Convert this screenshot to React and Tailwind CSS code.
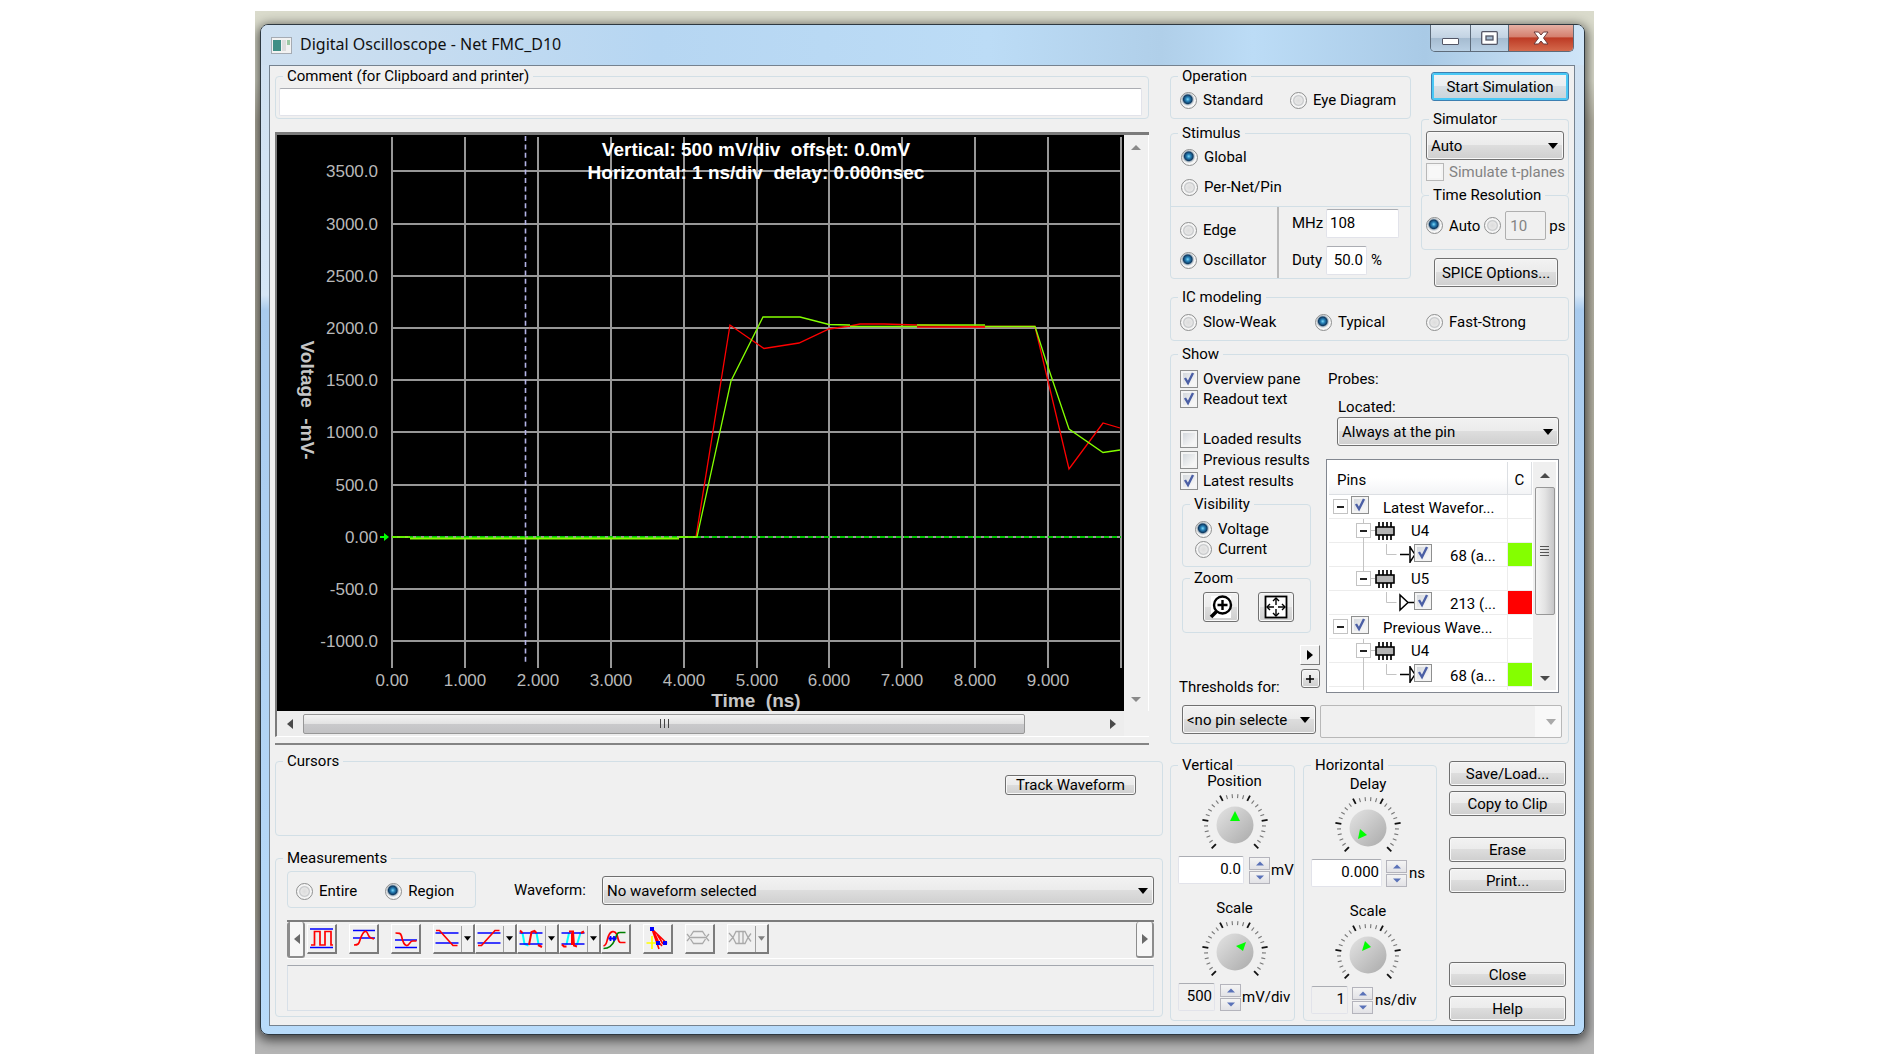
import { useId } from "react";

const GREEN = "#84ff00";
const NBSP = "\u00a0";

const gridX = [115, 188, 261, 334, 407, 480, 552, 625, 698, 771, 844];
const gridY = [36, 89, 141, 193, 245, 297, 350, 402, 454, 506];
const yLabels = ["3500.0", "3000.0", "2500.0", "2000.0", "1500.0", "1000.0", "500.0", "0.00", "-500.0", "-1000.0"];
const xLabels = ["0.00", "1.000", "2.000", "3.000", "4.000", "5.000", "6.000", "7.000", "8.000", "9.000"];

const pinRows = [
  { type: "root", text: "Latest Wavefor..." },
  { type: "chip", text: "U4" },
  { type: "leaf", text: "68 (a...", color: GREEN, out: false, more: true },
  { type: "chip", text: "U5", last: true },
  { type: "leaf", text: "213 (...", color: "#ff0000", out: true },
  { type: "root", text: "Previous Wave..." },
  { type: "chip", text: "U4" },
  { type: "leaf", text: "68 (a...", color: GREEN, out: false, more: true },
  { type: "chip", text: "", last: true },
];

const Group = ({ title, className = "", bodyClass = "", children }) => (
  <fieldset className={`min-w-0 rounded-[4px] border border-[#d2dfe6] ${className}`}>
    {title && <legend className="ml-[7px] px-1 h-5 leading-5">{title}</legend>}
    <div className={bodyClass}>{children}</div>
  </fieldset>
);

const Radio = ({ label, ariaLabel, name, checked, className = "" }) => (
  <label className={`flex items-center gap-[6px] h-5 whitespace-nowrap ${className}`}>
    <input
      type="radio"
      name={name}
      aria-label={ariaLabel}
      defaultChecked={checked}
      className="appearance-none shrink-0 size-[17px] rounded-full border border-[#8e8f8f] bg-[radial-gradient(circle,#dcdcdc_0%,#e6e6e6_35%,#c4c6c8_45%,#f6f6f6_58%)] checked:bg-[radial-gradient(circle_at_45%_42%,#7fd8f5_0%,#2a86bd_16%,#0e3a62_36%,#b9c3cb_46%,#f6f6f6_58%)]"
    />
    {label}
  </label>
);

const Check = ({ label, ariaLabel, checked, disabled, className = "" }) => (
  <label className={`flex items-center gap-[5px] h-5 whitespace-nowrap ${disabled ? "text-[#838383]" : ""} ${className}`}>
    <span className="relative block size-[18px] shrink-0">
      <input
        type="checkbox"
        aria-label={ariaLabel}
        defaultChecked={checked}
        disabled={disabled}
        className="peer appearance-none block size-[18px] border border-[#8e8f8f] bg-[linear-gradient(135deg,#cdd2d8,#f6f6f6_75%)] shadow-[inset_0_0_0_2px_#f4f4f4] disabled:border-[#b8b8b8] disabled:bg-none disabled:bg-[#f8f8f8]"
      />
      <svg viewBox="0 0 18 18" className="absolute inset-0 hidden peer-checked:block pointer-events-none">
        <path d="M5 8l3 5 5-10" fill="none" stroke="#4b5fa5" strokeWidth="2.4" />
      </svg>
    </span>
    {label}
  </label>
);

const Button = ({ className = "", children, ...rest }) => (
  <button
    className={`rounded-[3px] border border-[#707070] bg-[linear-gradient(#f2f2f2,#ebebeb_49%,#dddddd_50%,#cfcfcf)] shadow-[inset_0_0_0_1px_#f8f8f8] whitespace-nowrap flex items-center justify-center ${className}`}
    {...rest}
  >
    {children}
  </button>
);

const Select = ({ value, label, className = "" }) => (
  <span className={`relative block ${className}`}>
    <select
      aria-label={label}
      className="appearance-none block w-full h-[29px] pl-1 pr-6 rounded-[3px] border border-[#707070] bg-[linear-gradient(#f2f2f2,#ebebeb_49%,#dddddd_50%,#cfcfcf)] shadow-[inset_0_0_0_1px_#f8f8f8]"
    >
      <option>{value}</option>
    </select>
    <svg viewBox="0 0 10 6" className="absolute right-[6px] top-[12px] w-[10px] h-[6px] pointer-events-none">
      <path d="M0 0h10L5 6z" />
    </svg>
  </span>
);

const TextBox = ({ label, value, className = "", ...rest }) => (
  <input
    type="text"
    aria-label={label}
    defaultValue={value}
    className={`block min-w-0 border border-[#e2e3ea] border-t-[#abadb3] rounded-[2px] bg-white read-only:bg-[#f0f0f0] disabled:bg-transparent disabled:border-[#afafaf] disabled:text-[#838383] ${className}`}
    {...rest}
  />
);

const Triangle = ({ dir, color = "#4a4a4a", className = "w-[10px] h-[10px]" }) => {
  const d = { up: "M0 8h10L5 3z", down: "M0 3h10L5 8z", left: "M8 0v10L2 5z", right: "M2 0v10l6-5z" }[dir];
  return (
    <svg viewBox="0 0 10 10" className={className}>
      <path d={d} fill={color} />
    </svg>
  );
};

const Spinner = ({ label }) => (
  <span className="flex flex-col w-[21px] shrink-0 gap-px">
    {["up", "down"].map((dir) => (
      <button key={dir} aria-label={`${label} ${dir}`} className="h-[13px] flex items-center justify-center border border-[#b4b4bc] bg-[linear-gradient(#f4f4f4,#e2e2e6)]">
        <Triangle dir={dir} color="#5a72b8" className="w-2 h-2" />
      </button>
    ))}
  </span>
);

const Knob = ({ pointer }) => {
  const fill = useId();
  const ticks = Array.from({ length: 26 }, (_, i) => i);
  return (
    <svg viewBox="0 0 72 62" className="block w-[72px] h-[62px] mx-auto">
      <defs>
        <linearGradient id={fill} x1="0" y1="0" x2="1" y2="1">
          <stop offset="0" stopColor="#e4e4e4" />
          <stop offset="1" stopColor="#aaaaaa" />
        </linearGradient>
      </defs>
      {ticks.map((i) => {
        const major = i % 5 === 0;
        return (
          <line
            key={i}
            x1="36"
            x2="36"
            y1={major ? 1 : 3}
            y2="7"
            stroke={major ? "#111" : "#777"}
            strokeWidth={major ? 1.8 : 1.1}
            transform={`rotate(${-135 + i * 10.8} 36 34)`}
          />
        );
      })}
      <circle cx="36" cy="34" r="18.5" fill={`url(#${fill})`} />
      <polygon points={pointer} fill="#00ff00" transform="translate(36 34)" />
    </svg>
  );
};

const Plot = () => (
  <svg viewBox="0 0 847 576" className="block flex-1 min-w-0 bg-black font-['Liberation_Sans']">
    <g stroke="#979797" strokeWidth="2">
      {gridX.map((x) => <line key={x} x1={x} x2={x} y1="2" y2="533" />)}
      {gridY.map((y) => <line key={y} x1="115" x2="844" y1={y} y2={y} />)}
    </g>
    <line x1="248.5" x2="248.5" y1="1" y2="529" stroke="#b4b4e6" strokeWidth="1.600" strokeDasharray="5 3.4" />
    <line x1="115" x2="844" y1="402" y2="402" stroke="#00c800" strokeWidth="2" strokeDasharray="5 3" />
    <path d="M103 402h5" stroke="#00ff00" strokeWidth="2" />
    <path d="M107 398v8l5-4z" fill="#00ff00" />

    <g fill="none" strokeWidth="1.3">
      <path stroke="#ff0000" d="M419 402L453 190L487 213.5L522 208L552 194L573 191L583 189H607L639 190L708 191.5H758L792 334L826 288L843 293" />
      <path stroke={GREEN} d="M115 402h18M402 402h18L454 246L486 182H523L552 189.5L573 190" />
      <path stroke={GREEN} strokeWidth="1.800" d="M133 403.5H402" />
      <path stroke={GREEN} d="M573 191.5H640M640 190H708M708 191.5H758L769 226L792 294L826 317.5L843 315" />
      <path stroke="#ff0000" d="M640 192H708" />
    </g>

    <g fill="#b9b9b9" fontSize="17">
      {yLabels.map((t, i) => <text key={t} x="101" y={gridY[i] + 6} textAnchor="end">{t}</text>)}
      {xLabels.map((t, i) => <text key={t} x={gridX[i]} y="551" textAnchor="middle">{t}</text>)}
    </g>
    <g fill="#c6c6c6" fontSize="19" fontWeight="bold" textAnchor="middle">
      <text x="479" y="572">{`Time${NBSP}${NBSP}(ns)`}</text>
      <text transform="translate(24 265) rotate(90)">{`Voltage${NBSP}${NBSP}-mV-`}</text>
    </g>
    <g fill="#ffffff" fontSize="19" fontWeight="bold" textAnchor="middle">
      <text x="479" y="21">{`Vertical: 500 mV/div${NBSP}${NBSP}offset: 0.0mV`}</text>
      <text x="479" y="44">{`Horizontal: 1 ns/div${NBSP}${NBSP}delay: 0.000nsec`}</text>
    </g>
  </svg>
);

const icons = {
  period: (
    <>
      <path d="M2 4h23M2 22.500h23" stroke="#0000ff" />
      <path d="M3 20h3.500V6.500h5.500V20h5V6.500h6V20h2" stroke="#ff0000" />
    </>
  ),
  maximum: (
    <>
      <path d="M3 5.500h22M3 13h22" stroke="#0000ff" />
      <path d="M4 20c4 0 5-1 6-5 2-6 4-9 6-8.500s2 6 5 6.500l3 1" stroke="#ff0000" />
    </>
  ),
  minimum: (
    <>
      <path d="M3 15h22M3 22.500h22" stroke="#0000ff" />
      <path d="M3.500 8c4 0 5 0 6 3 1 5 2 9 5 9.500s3-4.500 6-4.500h4" stroke="#ff0000" />
    </>
  ),
  fall: (
    <>
      <path d="M1.500 8h23M1.500 18h23" stroke="#0000ff" />
      <path d="M2 5.500h3.500L19 20.500h4.500" stroke="#ff0000" />
    </>
  ),
  rise: (
    <>
      <path d="M1.500 8h23M1.500 18h23" stroke="#0000ff" />
      <path d="M2 20.500h3.500L19 5.500h4.500" stroke="#ff0000" />
    </>
  ),
  high: (
    <>
      <path d="M4.500 8l2 11 4 1.500M18.500 8l2 11" stroke="#00ffff" strokeWidth="2" />
      <path d="M1.500 8h23M1.500 19h23" stroke="#0000ff" />
      <path d="M2 5.500l2.500 2.500M11 20l2.500-13 3-1 2 2M20 20l4 2" stroke="#ff0000" strokeWidth="2" />
    </>
  ),
  low: (
    <>
      <path d="M6.500 19.500L9 8M17 19.500L20.500 8" stroke="#00ffff" strokeWidth="2" />
      <path d="M1.500 8h23M1.500 19h23" stroke="#0000ff" />
      <path d="M2 19.500l2 2h2.500M9 6.500h4l1 14 3 1M12 8v12M21 8l3-1.500" stroke="#ff0000" strokeWidth="2" />
    </>
  ),
  delay: (
    <>
      <path d="M1.500 21c4-1 3-6 5-10 2-5 6-6 8-2 2 3 1 8 4 8.500h5" stroke="#ff0000" />
      <path d="M1.500 23.500c6 0 9-3 11.500-9 2-5 2-7 5-7h5.500" stroke="#008000" />
      <path d="M6.500 13.500h8M8.500 11v5M12 11v5" stroke="#0000ff" strokeWidth="1.800" />
    </>
  ),
  slope: (
    <>
      <path d="M8 11v13M2.500 18h11" stroke="#ffff00" />
      <path d="M8 4l7 20M8 4l15 14.500M10 7l6 13M13 9l6 10M12 14l6 7" stroke="#ff0000" strokeWidth="1.600" />
      <path d="M6 2h4v4H6zM12 16h4v4h-4zM19 16h4v4h-4z" fill="#0000ff" stroke="none" />
    </>
  ),
  eyeHeight: (
    <path d="M1 9l3 3.500L1 16M23 9l-3 3.500 3 3.500M4 12.500h16M4.500 11l3-4.500h9l3 4.500M4.500 14l3 4.500h9l3-4.500" stroke="#a9a9a9" strokeWidth="1.300" />
  ),
  eyeWidth: (
    <path d="M1 8l4 4.500L1 17M23 8.500l-3 4 3 4M5 12.500l3-6h9l3 6-3 6H8zM11 6.500v12M15 6.500v12" stroke="#a9a9a9" strokeWidth="1.300" />
  ),
};

const ToolButton = ({ icon, label, menu, gap, disabled }) => (
  <button
    aria-label={label}
    disabled={disabled}
    className={`flex h-[30px] shrink-0 items-center border border-r-2 border-b-2 border-white border-r-[#7c7c7c] border-b-[#7c7c7c] ${menu ? "w-[42px]" : "w-[30px]"} ${gap ? "mr-3" : ""}`}
  >
    <svg viewBox="0 0 28 28" fill="none" strokeWidth="1.700" className="w-7 h-7 shrink-0 -mr-px">{icons[icon]}</svg>
    {menu && (
      <span className="flex-1 h-[26px] flex items-center justify-center border-l border-[#a0a0a0]">
        <svg viewBox="0 0 8 5" className="w-[7px] h-[5px]"><path d="M0 0h8L4 5z" fill={disabled ? "#808080" : "#000"} /></svg>
      </span>
    )}
  </button>
);

const Chip = () => (
  <svg viewBox="0 0 20 18" className="w-5 h-[18px]">
    <path d="M4 0v18M8 0v18M12 0v18M16 0v18" stroke="#000" strokeWidth="1.700" />
    <rect x="1" y="5" width="18" height="8" fill="#b4b4b4" stroke="#000" strokeWidth="1.600" />
  </svg>
);

const Expander = () => (
  <button aria-label="Collapse" className="size-[15px] shrink-0 border border-[#c3c3c3] bg-white flex items-center justify-center">
    <span className="w-[7px] h-[2px] bg-[#222]" />
  </button>
);

const PinCell = ({ row }) => {
  if (row.type === "root") {
    return (
      <div className="flex items-center h-6 pl-1">
        <Expander />
        <Check ariaLabel={row.text} checked className="ml-[3px] -mt-1" />
        <span className="ml-[14px] pt-[2px]">{row.text}</span>
      </div>
    );
  }
  if (row.type === "chip") {
    return (
      <div className="relative flex items-center h-6 pl-[27px]">
        <span className={`absolute left-[34px] top-0 w-px bg-[#c3c3c3] ${row.last ? "h-3" : "h-6"}`} />
        <span className="relative flex items-center">
          <Expander />
        </span>
        <span className="w-1 h-px bg-[#c3c3c3]" />
        <Chip />
        <span className="ml-4">{row.text}</span>
      </div>
    );
  }
  return (
    <div className="flex items-center h-6">
      <svg viewBox="0 0 85 24" className="w-[85px] h-6 shrink-0" fill="none">
        {row.more && <path d="M34.500 0v24" stroke="#c3c3c3" />}
        <path d="M57.500 1v10.500h10" stroke="#c3c3c3" />
        {row.out ? (
          <path d="M71 4v15l8-7.500zM79 11.500h6" stroke="#000" strokeWidth="1.500" />
        ) : (
          <path d="M71 11.500h9M81 3v17M81 4l5 7.500-5 7.500" stroke="#000" strokeWidth="1.500" />
        )}
      </svg>
      <Check ariaLabel={row.text} checked className="-mt-[3px]" />
      <span className="ml-[18px] pt-[2px]">{row.text}</span>
    </div>
  );
};

const PinTree = () => (
  <div className="flex h-[234px] overflow-hidden border border-[#828790] bg-white p-[2px]">
    <div className="flex-1 min-w-0 overflow-hidden">
      <table className="w-full table-fixed border-collapse">
        <thead>
          <tr className="h-8 bg-[linear-gradient(#fff_50%,#f3f4f6)]">
            <th className="border-b border-r border-[#dcdfe3] pl-2 pt-1 text-left font-normal">Pins</th>
            <th className="w-[24px] border-b border-r border-[#dcdfe3] pt-1 text-center font-normal">C</th>
          </tr>
        </thead>
        <tbody>
          {pinRows.map((row, i) => (
            <tr key={i}>
              <td className="p-0 whitespace-nowrap border-b border-r border-[#ececec] h-6">
                <div className="h-[23px]">
                  <PinCell row={row} />
                </div>
              </td>
              <td className="p-0 border-b border-[#ececec]" style={{ backgroundColor: row.color }} />
            </tr>
          ))}
        </tbody>
      </table>
    </div>
    <div className="w-[23px] shrink-0 ml-px flex flex-col items-center bg-[#efefef]">
      <button aria-label="Scroll pins up" className="h-[25px]"><Triangle dir="up" /></button>
      <div className="w-5 h-[128px] rounded-[2px] border border-[#979797] bg-[linear-gradient(90deg,#f4f4f4,#e3e3e3_50%,#c6c6c8)] flex flex-col items-center justify-center gap-[2px]">
        {[0, 1, 2, 3].map((i) => <span key={i} className="w-[9px] h-px bg-[#555]" />)}
      </div>
      <button aria-label="Scroll pins down" className="h-[25px] mt-auto"><Triangle dir="down" /></button>
    </div>
  </div>
);

const TitleBar = () => (
  <div className="flex h-10 rounded-t-[7px] bg-[linear-gradient(90deg,#cfe0f0,#c6dcf0_12%,#b6d6f2_30%,#bcdcf6_55%,#b0cfe9_68%,#bcdcf6_75%,#a9cae6_88%,#cfe5f8)]">
    <div className="flex flex-1 items-center gap-2 pl-[10px]">
      <svg viewBox="0 0 21 17" className="w-[21px] h-[17px]">
        <rect x="0.5" y="0.5" width="20" height="16" fill="#f2f2f2" stroke="#a5abb3" />
        <rect x="2" y="3" width="8" height="11" fill="#3f8f86" />
        <rect x="11" y="3" width="4" height="11" fill="#dcdcdc" />
        <rect x="16" y="3" width="3" height="5" fill="#9cc8a4" />
      </svg>
      <h1 className="font-['Noto_Sans'] text-base leading-5 pb-[2px] text-[#111]">Digital Oscilloscope - Net FMC_D10</h1>
    </div>
    <div className="flex h-[27px] mr-[10px] rounded-b-[5px] border border-t-0 border-[#5d6b7a] overflow-hidden">
      <button aria-label="Minimize" className="w-10 border-r border-[#5d6b7a] flex items-end justify-center pb-[6px] bg-[linear-gradient(#d9e5f0,#c3d3e3_48%,#a5bbd0_50%,#b9d0e4)]">
        <span className="w-[17px] h-[7px] rounded-[1px] border border-[#535666] bg-white" />
      </button>
      <button aria-label="Maximize" className="w-[38px] border-r border-[#5d6b7a] flex items-center justify-center bg-[linear-gradient(#d9e5f0,#c3d3e3_48%,#a5bbd0_50%,#b9d0e4)]">
        <svg viewBox="0 0 17 14" className="w-[17px] h-[14px]">
          <rect x="0.7" y="0.7" width="15.600" height="12.600" rx="1" fill="#fff" stroke="#535666" strokeWidth="1.300" />
          <rect x="5" y="5" width="7" height="4" fill="#a5bbd0" stroke="#535666" strokeWidth="1.300" />
        </svg>
      </button>
      <button aria-label="Close window" className="w-16 flex items-center justify-center bg-[linear-gradient(#e5b0a4,#d5806f_45%,#bd3b25_50%,#d4694c)]">
        <svg viewBox="0 0 16 14" className="w-4 h-[14px]">
          <path d="M1 1h4.500L8 4l2.500-3H15l-4.500 6 4.500 6h-4.500L8 10l-2.500 3H1l4.500-6z" fill="#fff" stroke="#6a3a3a" />
        </svg>
      </button>
    </div>
  </div>
);

const PlotPanel = () => (
  <>
    <div className="mr-[14px] mt-[13px] border-t-[3px] border-l-2 border-[#7b7b7b] border-b border-b-white">
      <div className="flex">
        <Plot />
        <div className="w-[25px] shrink-0 flex flex-col justify-between items-center py-[7px] bg-[#f0f0f0] border-r border-white">
          <button aria-label="Scroll plot up"><Triangle dir="up" color="#8a8a8a" /></button>
          <button aria-label="Scroll plot down"><Triangle dir="down" color="#8a8a8a" /></button>
        </div>
      </div>
      <div className="flex items-center h-[25px] mr-[25px] bg-[#ededed]">
        <button aria-label="Scroll plot left" className="w-[26px] flex justify-center"><Triangle dir="left" /></button>
        <div className="flex-1 h-5 rounded-[2px] border border-[#979797] bg-[linear-gradient(#f4f4f4,#e3e3e3_48%,#c9c9cb_52%,#c2c2c4)] flex items-center justify-center gap-[3px]">
          {[0, 1, 2].map((i) => <span key={i} className="w-px h-[9px] bg-[#444]" />)}
        </div>
        <button aria-label="Scroll plot right" className="w-[99px] flex justify-end pr-[6px]"><Triangle dir="right" /></button>
      </div>
    </div>
    <div className="mr-[14px] mt-[6px] h-[2px] bg-[#848484]" />
  </>
);

const Measurements = () => (
  <Group title="Measurements" className="mt-3 h-[169px]" bodyClass="pl-[11px] pr-2">
    <div className="flex mt-[3px]">
      <Group className="h-[37px] w-[189px]" bodyClass="flex pt-[9px] pl-2">
        <Radio name="range" label="Entire" />
        <Radio name="range" label="Region" checked className="ml-[28px]" />
      </Group>
      <span className="ml-[38px] mt-[9px] w-[88px]">Waveform:</span>
      <Select label="Waveform" value="No waveform selected" className="mt-[5px] flex-1" />
    </div>
    <div className="mt-[12px] flex h-[39px] border-t-2 border-[#7c7c7c] border-b border-b-white">
      <button aria-label="Scroll tools left" className="w-[18px] mr-[2px] rounded-[3px] border-2 border-[#8c8c8c] border-l-[3px] border-t-0 bg-[#f6f6f6] flex items-center justify-center">
        <Triangle dir="left" color="#6a6a6a" />
      </button>
      <div className="flex flex-1 items-start pt-[2px]">
        <ToolButton icon="period" label="Period" gap />
        <ToolButton icon="maximum" label="Maximum" gap />
        <ToolButton icon="minimum" label="Minimum" gap />
        <ToolButton icon="fall" label="Fall time" menu />
        <ToolButton icon="rise" label="Rise time" menu />
        <ToolButton icon="high" label="Overshoot high" menu />
        <ToolButton icon="low" label="Overshoot low" menu />
        <ToolButton icon="delay" label="Delay" gap />
        <ToolButton icon="slope" label="Slope" gap />
        <ToolButton icon="eyeHeight" label="Eye height" gap disabled />
        <ToolButton icon="eyeWidth" label="Eye width" menu disabled />
      </div>
      <button aria-label="Scroll tools right" className="w-[18px] rounded-[3px] border border-r-2 border-b-2 border-t-0 border-[#8c8c8c] bg-[#f6f6f6] flex items-center justify-center">
        <Triangle dir="right" color="#6a6a6a" />
      </button>
    </div>
    <div className="mt-[6px] h-[46px] border border-[#d8e0e8] border-t-[#a3a7ae]" />
  </Group>
);

const StimulusColumn = () => (
  <div className="flex-1">
    <Group title="Operation" className="h-[53px]" bodyClass="flex pl-[9px] pt-1">
      <Radio name="operation" label="Standard" checked className="w-[110px]" />
      <Radio name="operation" label="Eye Diagram" />
    </Group>
    <Group title="Stimulus" className="mt-1 h-[156px]">
      <div className="flex flex-col gap-[10px] pl-[10px] pt-1 h-[63px]">
        <Radio name="stimulus" label="Global" checked />
        <Radio name="stimulus" label="Per-Net/Pin" />
      </div>
      <div className="flex border-t border-[#d2dfe6] h-[72px]">
        <div className="w-[108px] border-r-2 border-[#b9b9b9] flex flex-col gap-[10px] pt-[13px] pl-[9px]">
          <Radio name="source" label="Edge" />
          <Radio name="source" label="Oscillator" checked />
        </div>
        <div className="pl-[13px] pt-[2px] flex flex-col gap-2">
          <label className="flex items-center h-[29px]">
            <span className="w-[34px] pb-[2px]">MHz</span>
            <TextBox value="108" className="w-[73px] h-[29px] pl-[3px] pb-[2px]" />
          </label>
          <label className="flex items-center h-[29px]">
            <span className="w-[34px] pb-[2px]">Duty</span>
            <TextBox value="50.0" className="w-[41px] h-[29px] pr-[3px] pb-[2px] text-right" />
            <span className="ml-1 pb-[2px]">%</span>
          </label>
        </div>
      </div>
    </Group>
  </div>
);

const SimulatorColumn = () => (
  <div className="w-[148px] flex flex-col pt-[6px]">
    <button className="h-[29px] ml-[10px] rounded-[3px] border border-[#3c7fb1] bg-[linear-gradient(#f2f2f2,#e8eef2_49%,#d6dfe5_50%,#c9d3d9)] shadow-[inset_0_0_0_2px_#49c8f5]">
      Start Simulation
    </button>
    <Group title="Simulator" className="mt-2 h-[86px] border-b-0" bodyClass="px-1">
      <Select label="Simulator" value="Auto" className="mt-[2px]" />
      <Check label="Simulate t-planes" disabled className="mt-[2px]" />
    </Group>
    <Group title="Time Resolution" className="-mt-[10px] h-[65px]" bodyClass="flex items-center pl-1 pt-[6px]">
      <Radio name="resolution" label="Auto" checked />
      <Radio name="resolution" ariaLabel="Fixed resolution" className="ml-1" />
      <TextBox label="Resolution" value="10" disabled className="ml-1 w-[41px] h-[29px] pl-1" />
      <span className="ml-[3px]">ps</span>
    </Group>
    <Button className="mt-2 ml-[13px] w-[124px] h-[29px]">SPICE Options...</Button>
  </div>
);

const ShowPanel = () => (
  <Group title="Show" className="mt-[3px] h-[400px]">
    <div className="flex h-[334px]">
      <div className="w-[155px] pl-[9px] flex flex-col">
        <Check label="Overview pane" checked className="mt-[5px]" />
        <Check label="Readout text" checked />
        <Check label="Loaded results" className="mt-5" />
        <Check label="Previous results" className="mt-px" />
        <Check label="Latest results" checked className="mt-px" />
        <Group title="Visibility" className="h-[73px] w-[129px] ml-[2px] mt-[3px]" bodyClass="pl-3 pt-[5px]">
          <Radio name="visibility" label="Voltage" checked />
          <Radio name="visibility" label="Current" />
        </Group>
        <Group title="Zoom" className="h-[65px] w-[129px] ml-[2px] mt-px" bodyClass="flex gap-[19px] pl-5 pt-1">
          <Button aria-label="Zoom in" className="w-[36px] h-[30px]">
            <svg viewBox="0 0 26 24" className="w-[26px] h-6" fill="none" stroke="#000">
              <path d="M3 1h20v22H3z" fill="#fff" stroke="none" />
              <circle cx="14.500" cy="10" r="8.500" fill="#fff" strokeWidth="2.400" />
              <path d="M14.500 5v10M9.500 10h10" strokeWidth="2.400" />
              <path d="M9 16l-6 6" strokeWidth="3.500" />
            </svg>
          </Button>
          <Button aria-label="Fit to window" className="w-[36px] h-[30px]">
            <svg viewBox="0 0 24 24" className="w-6 h-6" fill="none" stroke="#000" strokeWidth="1.400">
              <rect x="1.500" y="1.500" width="21" height="21" fill="#fff" strokeWidth="1.800" />
              <path d="M12 3v18M3 12h18" strokeDasharray="7 4" />
              <path d="M9 6l3-3 3 3M9 18l3 3 3-3M6 9l-3 3 3 3M18 9l3 3-3 3" />
            </svg>
          </Button>
        </Group>
        <div className="flex mt-3 justify-between pr-[6px]">
          <span className="mt-[32px] -ml-px">Thresholds for:</span>
          <div className="flex flex-col gap-1 items-center">
            <button aria-label="Expand pins" className="size-5 border border-white border-r-[#7c7c7c] border-b-[#7c7c7c] bg-[#f0f0f0] flex items-center justify-center">
              <Triangle dir="right" color="#000" />
            </button>
            <Button aria-label="Add probe" className="w-[19px] h-[19px]">
              <svg viewBox="0 0 8 8" className="w-2 h-2"><path d="M4 0v8M0 4h8" stroke="#000" strokeWidth="1.500" /></svg>
            </Button>
          </div>
        </div>
      </div>
      <div className="flex-1 min-w-0 pr-[9px]">
        <p className="mt-[5px] pl-[2px]">Probes:</p>
        <p className="mt-2 pl-3">Located:</p>
        <Select label="Located" value="Always at the pin" className="ml-[11px] mb-[13px]" />
        <PinTree />
      </div>
    </div>
    <div className="flex items-start mt-[7px] pl-[11px] pr-[6px] gap-1">
      <Select label="Thresholds for" value="<no pin selecte" className="w-[134px]" />
      <span className="relative block flex-1">
        <select aria-label="Threshold" disabled className="appearance-none block w-full h-[33px] border border-[#b8b8b8] rounded-[2px] bg-[#f0f0f0] shadow-[inset_-26px_0_0_#f8f8f8]" />
        <svg viewBox="0 0 10 6" className="absolute right-[6px] top-[14px] w-[10px] h-[6px] pointer-events-none">
          <path d="M0 0h10L5 6z" fill="#a9a9a9" />
        </svg>
      </span>
    </div>
  </Group>
);

const BottomPanel = () => (
  <div className="flex mt-[11px] h-[266px] pr-[3px]">
    <Group title="Vertical" className="w-[125px]" bodyClass="-mt-1">
      <div className="pl-1">
        <p className="text-center">Position</p>
        <Knob pointer="-5,-4 5,-4 0,-14" />
      </div>
      <div className="flex items-center mt-[3px] pl-[7px] h-7">
        <TextBox label="Vertical position" value="0.0" className="w-[66px] h-7 pr-[2px] pb-[2px] text-right" />
        <span className="w-[5px]" />
        <Spinner label="Vertical position" />
        <span className="ml-px">mV</span>
      </div>
      <div className="pl-1 mt-[14px]">
        <p className="text-center">Scale</p>
        <Knob pointer="1,-6 11,-10 8,-1" />
      </div>
      <div className="flex items-center mt-[3px] pl-[7px] h-7">
        <TextBox label="Vertical scale" value="500" readOnly className="w-[37px] h-7 pr-[2px] pb-[2px] text-right" />
        <span className="w-[5px]" />
        <Spinner label="Vertical scale" />
        <span className="ml-px">mV/div</span>
      </div>
    </Group>
    <Group title="Horizontal" className="w-[134px] ml-2" bodyClass="-mt-px">
      <div className="pr-1">
        <p className="text-center">Delay</p>
        <Knob pointer="-8,1 -1,7 -10,11" />
      </div>
      <div className="flex items-center mt-[3px] pl-[7px] h-7">
        <TextBox label="Horizontal delay" value="0.000" className="w-[71px] h-7 pr-[2px] pb-[2px] text-right" />
        <span className="w-[4px]" />
        <Spinner label="Horizontal delay" />
        <span className="ml-[2px]">ns</span>
      </div>
      <div className="pr-1 mt-[14px]">
        <p className="text-center">Scale</p>
        <Knob pointer="-3,-14 3,-8 -6,-4" />
      </div>
      <div className="flex items-center mt-[3px] pl-[7px] h-7">
        <TextBox label="Horizontal scale" value="1" readOnly className="w-[37px] h-7 pr-[2px] pb-[2px] text-right" />
        <span className="w-[4px]" />
        <Spinner label="Horizontal scale" />
        <span className="ml-[2px]">ns/div</span>
      </div>
    </Group>
    <div className="flex flex-1 flex-col ml-3 pt-[6px]">
      <Button className="h-[25px]">Save/Load...</Button>
      <Button className="h-[25px] mt-[5px]">Copy to Clip</Button>
      <Button className="h-[25px] mt-[21px]">Erase</Button>
      <Button className="h-[25px] mt-[6px]">Print...</Button>
      <Button className="h-[25px] mt-auto">Close</Button>
      <Button className="h-[25px] mt-[9px]">Help</Button>
    </div>
  </div>
);

const App = () => (
  <div className="min-h-screen bg-white pt-[11px] pb-[9px] pl-[255px] pr-[296px] font-['Roboto',sans-serif] text-[15px] leading-5 text-black">
    <div className="pt-[13px] pb-[19px] pl-[5px] pr-[9px] overflow-hidden bg-[linear-gradient(#dadbcc_0,#dadbcc_70px,#b9b6a8_110px,#b3b0a2_900px,#b5b5b5_960px)]">
      <div className="rounded-[8px] border border-[#2e3840] bg-[linear-gradient(#cfe0f0,#d5e6f6_270px,#a9cbee_285px,#b4d6f6_800px,#b8dbfa)] shadow-[0_3px_12px_2px_rgba(0,0,0,0.65)]">
        <TitleBar />
        <main className="ml-2 mr-[9px] mb-2 flex gap-[7px] border border-[#75828f] bg-[#f0f0f0] px-[5px] pb-1">
          <div className="flex-1 min-w-0">
            <Group title="Comment (for Clipboard and printer)" className="mr-[14px] h-[53px]" bodyClass="pl-[3px] pr-[6px] pt-[2px]">
              <TextBox label="Comment" className="w-full h-7 px-1" />
            </Group>
            <PlotPanel />
            <Group title="Cursors" className="mt-[6px] h-[85px]" bodyClass="flex justify-end pr-[26px] pt-1">
              <Button className="w-[131px] h-5">Track Waveform</Button>
            </Group>
            <Measurements />
          </div>
          <div className="w-[399px] shrink-0">
            <div className="flex gap-[10px]">
              <StimulusColumn />
              <SimulatorColumn />
            </div>
            <Group title="IC modeling" className="h-[54px]" bodyClass="flex pl-[9px] pt-[5px]">
              <Radio name="model" label="Slow-Weak" className="w-[135px]" />
              <Radio name="model" label="Typical" checked className="w-[111px]" />
              <Radio name="model" label="Fast-Strong" />
            </Group>
            <ShowPanel />
            <BottomPanel />
          </div>
        </main>
      </div>
    </div>
  </div>
);

export default App;
